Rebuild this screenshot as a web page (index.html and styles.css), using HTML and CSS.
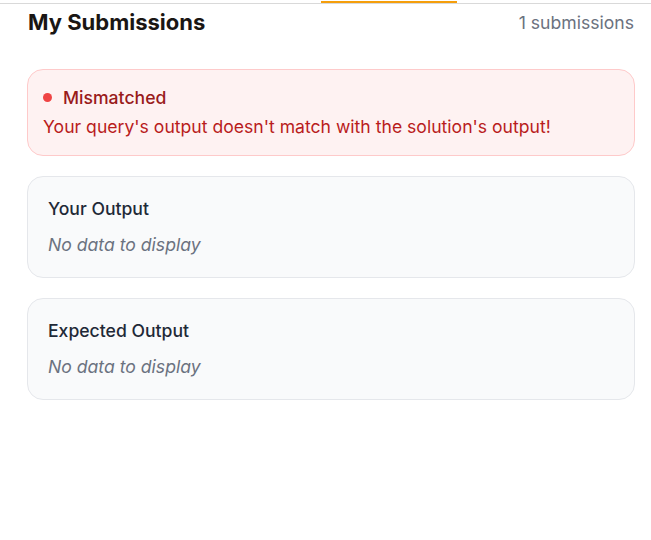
FILE: index.html
```html
<!DOCTYPE html>
<html>
<head>
<meta charset="utf-8">
<link rel="stylesheet" href="styles.css">
</head>
<body>
<div class="tabbar"><span class="tab-indicator"></span></div>
<main class="panel">
  <header class="head">
    <h1 class="title">My Submissions</h1>
    <span class="count">1 submissions</span>
  </header>
  <section class="status">
    <div class="status-head"><span class="dot"></span><span class="status-label">Mismatched</span></div>
    <p class="status-msg">Your query's output doesn't match with the solution's output!</p>
  </section>
  <section class="card">
    <h2 class="card-title">Your Output</h2>
    <p class="empty">No data to display</p>
  </section>
  <section class="card">
    <h2 class="card-title">Expected Output</h2>
    <p class="empty">No data to display</p>
  </section>
</main>
</body>
</html>
```
FILE: styles.css
```css
* { box-sizing: border-box; }
html, body { margin: 0; padding: 0; background: #fff; }
body { font-family: Inter, "Noto Sans", sans-serif; color: #111827; }
.tabbar {
  position: relative;
  height: 4px;
  border-bottom: 1px solid #d9d9d9;
}
.tab-indicator {
  position: absolute;
  left: 321px;
  top: 1px;
  width: 136px;
  height: 2px;
  background: #f59e0b;
}
.panel {
  width: 608px;
  margin-left: 27px;
  display: flex;
  flex-direction: column;
}
.head {
  display: flex;
  justify-content: space-between;
  align-items: center;
  height: 36px;
  margin-bottom: 29px;
}
.title {
  margin: 0;
  font-size: 22px;
  font-weight: 700;
  color: #1a1614;
  padding-left: 1px;
}
.count {
  font-size: 17.6px;
  color: #6b7280;
  padding-right: 1px;
}
.status {
  background: #fef2f2;
  border: 1px solid #fecaca;
  border-radius: 16px;
  padding: 15px 15px 16px 15px;
  margin-bottom: 20px;
}
.status-head {
  display: flex;
  align-items: center;
  gap: 11px;
  height: 24px;
  margin-bottom: 6px;
}
.dot {
  width: 9px;
  height: 9px;
  border-radius: 50%;
  background: #ef4444;
}
.status-label {
  font-size: 17.6px;
  font-weight: 500;
  color: #991b1b;
}
.status-msg {
  margin: 0;
  font-size: 17.6px;
  line-height: 24px;
  color: #b91c1c;
}
.card {
  background: #f9fafb;
  border: 1px solid #e5e7eb;
  border-radius: 16px;
  padding: 20px;
  margin-bottom: 20px;
}
.card-title {
  margin: 0 0 12px;
  font-size: 17.6px;
  line-height: 24px;
  font-weight: 500;
  color: #1f2937;
}
.empty {
  margin: 0;
  font-size: 17.6px;
  line-height: 24px;
  font-style: italic;
  color: #6b7280;
}
```
